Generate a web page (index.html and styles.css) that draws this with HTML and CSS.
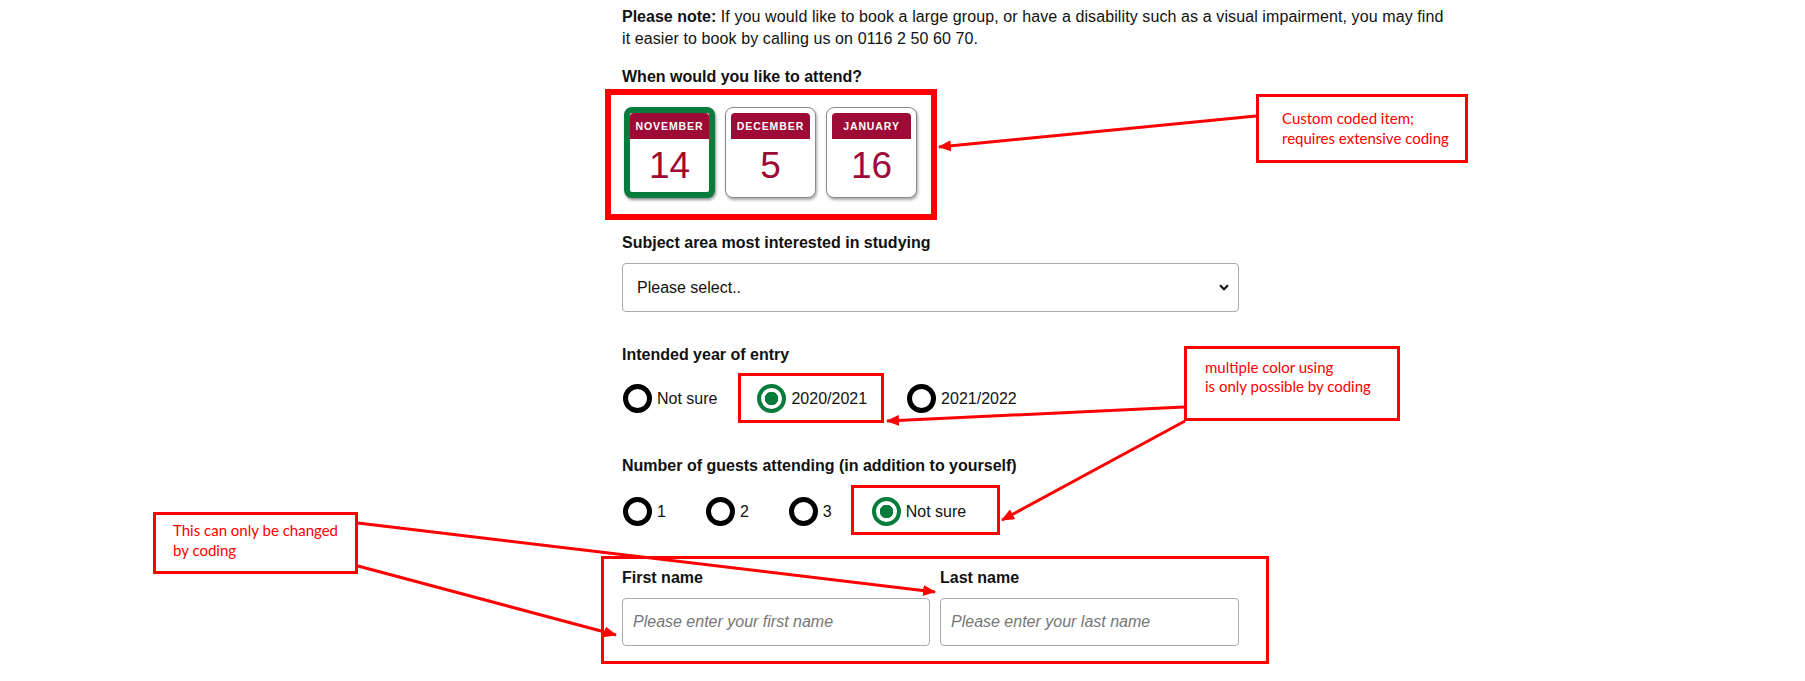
FILE: index.html
```html
<!DOCTYPE html>
<html lang="en">
<head>
<meta charset="utf-8">
<title>Open day booking</title>
<link rel="stylesheet" href="styles.css">
</head>
<body>
<main class="form">
  <p class="note"><strong>Please note:</strong> If you would like to book a large group, or have a disability such as a visual impairment, you may find it easier to book by calling us on 0116 2 50 60 70.</p>

  <section class="field field-attend">
    <div class="label">When would you like to attend?</div>
    <div class="dates">
      <div class="date is-selected">
        <div class="month">November</div>
        <div class="day">14</div>
      </div>
      <div class="date">
        <div class="month">December</div>
        <div class="day">5</div>
      </div>
      <div class="date">
        <div class="month">January</div>
        <div class="day">16</div>
      </div>
    </div>
  </section>

  <section class="field field-subject">
    <label class="label" for="subject">Subject area most interested in studying</label>
    <div class="select-wrap">
      <select id="subject" class="select">
        <option>Please select..</option>
      </select>
      <svg class="chevron" width="10" height="7" viewBox="0 0 10 7"><path d="M1 1.2 L5 5.2 L9 1.2" fill="none" stroke="#111" stroke-width="2.2"/></svg>
    </div>
  </section>

  <section class="field field-year">
    <div class="label">Intended year of entry</div>
    <div class="radios">
      <div class="radio"><span class="dot"></span><span>Not sure</span></div>
      <div class="radio is-checked"><span class="dot"></span><span>2020/2021</span></div>
      <div class="radio"><span class="dot"></span><span>2021/2022</span></div>
    </div>
  </section>

  <section class="field field-guests">
    <div class="label">Number of guests attending (in addition to yourself)</div>
    <div class="radios">
      <div class="radio"><span class="dot"></span><span>1</span></div>
      <div class="radio"><span class="dot"></span><span>2</span></div>
      <div class="radio"><span class="dot"></span><span>3</span></div>
      <div class="radio is-checked"><span class="dot"></span><span>Not sure</span></div>
    </div>
  </section>

  <section class="field field-names">
    <div class="name-col">
      <label class="label" for="first">First name</label>
      <input id="first" class="input" type="text" placeholder="Please enter your first name">
    </div>
    <div class="name-col">
      <label class="label" for="last">Last name</label>
      <input id="last" class="input" type="text" placeholder="Please enter your last name">
    </div>
  </section>
</main>

<div class="annotations">
  <div class="hl hl-dates"></div>
  <div class="hl hl-year"></div>
  <div class="hl hl-guests"></div>
  <div class="hl hl-names"></div>

  <div class="callout callout-1">Custom coded item;<br>requires extensive coding</div>
  <div class="callout callout-2">multiple color using<br>is only possible by coding</div>
  <div class="callout callout-3">This can only be changed<br>by coding</div>

  <svg class="arrows" width="1805" height="681" viewBox="0 0 1805 681">
    <defs>
      <marker id="head" markerUnits="userSpaceOnUse" markerWidth="13" markerHeight="11" refX="12" refY="5.5" orient="auto">
        <path d="M0 0 L13 5.5 L0 11 Z" fill="#ff0000"/>
      </marker>
    </defs>
    <g stroke="#ff0000" stroke-width="3" fill="none" marker-end="url(#head)">
      <line x1="1256" y1="116" x2="939" y2="147"/>
      <line x1="1184" y1="407" x2="887" y2="421"/>
      <line x1="1185" y1="421" x2="1002" y2="520"/>
      <line x1="358" y1="523" x2="935" y2="592"/>
      <line x1="358" y1="566" x2="616" y2="635"/>
    </g>
  </svg>
</div>
</body>
</html>
```

FILE: styles.css
```css
* {
  box-sizing: border-box;
}

html, body {
  margin: 0;
  padding: 0;
  background: #ffffff;
}

body {
  width: 1805px;
  height: 681px;
  overflow: hidden;
  position: relative;
  font-family: "Liberation Sans", Arial, sans-serif;
  font-size: 16px;
  line-height: 22px;
  color: #111111;
}

.form {
  padding: 6px 0 0 622px;
}

.note {
  margin: 0;
  width: 828px;
  letter-spacing: 0.1px;
}

.note strong {
  font-weight: bold;
  letter-spacing: 0;
}

.label {
  display: block;
  font-weight: bold;
  color: #111;
}

.field-attend {
  margin-top: 16px;
}

.dates {
  display: flex;
  gap: 10px;
  margin-top: 19px;
  padding-left: 2px;
}

.date {
  width: 91px;
  height: 91px;
  border: 1px solid #8a8a8a;
  border-radius: 8px;
  padding: 5px;
  background: #fff;
  box-shadow: 1px 2px 3px rgba(0, 0, 0, 0.35);
  display: flex;
  flex-direction: column;
}

.date.is-selected {
  border: 6px solid #067c3c;
  padding: 0;
  box-shadow: 1px 2px 3px rgba(0, 0, 0, 0.45);
}

.month {
  height: 26px;
  line-height: 26px;
  background: #9d0a36;
  color: #ffffff;
  text-transform: uppercase;
  text-align: center;
  font-weight: bold;
  font-size: 10.5px;
  letter-spacing: 0.9px;
  border-radius: 4px 4px 0 0;
}

.day {
  flex: 1;
  text-align: center;
  font-size: 37px;
  line-height: 53px;
  color: #9d0a36;
}

.field-subject {
  margin-top: 34px;
}

.select-wrap {
  position: relative;
  width: 617px;
  margin-top: 9px;
}

.select {
  display: block;
  width: 617px;
  height: 49px;
  margin: 0;
  padding: 0 0 0 14px;
  border: 1px solid #a9a9a9;
  border-radius: 4px;
  background: #fff;
  font-family: "Liberation Sans", Arial, sans-serif;
  font-size: 16px;
  color: #111;
  appearance: none;
  -webkit-appearance: none;
}

.chevron {
  position: absolute;
  right: 10px;
  top: 21px;
  pointer-events: none;
}

.field-year {
  margin-top: 32px;
}

.field-guests {
  margin-top: 42px;
}

.radios {
  display: flex;
  gap: 40px;
  margin-top: 18px;
  padding-left: 1px;
}

.field-guests .radios {
  margin-top: 20px;
}

.radio {
  display: flex;
  align-items: center;
  gap: 5px;
  color: #111;
}

.dot {
  width: 29px;
  height: 29px;
  border: 5px solid #000;
  border-radius: 50%;
  background: #fff;
  flex: none;
}

.radio.is-checked .dot {
  border: 4px solid #067c3c;
  background: radial-gradient(circle, #067c3c 0 6.5px, #fff 7px);
}

.field-names {
  margin-top: 41px;
  display: grid;
  grid-template-columns: 308px 299px;
  column-gap: 10px;
}

.input {
  display: block;
  width: 100%;
  height: 48px;
  margin-top: 9px;
  padding: 0 0 0 10px;
  border: 1px solid #a9a9a9;
  border-radius: 4px;
  font-family: "Liberation Sans", Arial, sans-serif;
  font-size: 16px;
  color: #111;
  background: #fff;
}

.input::placeholder {
  color: #767676;
  font-style: italic;
}

/* ---------- annotation overlay ---------- */

.annotations {
  position: absolute;
  left: 0;
  top: 0;
  width: 1805px;
  height: 681px;
  pointer-events: none;
}

.hl {
  position: absolute;
  border: 3px solid #ff0000;
}

.hl-dates {
  left: 605px;
  top: 89px;
  width: 332px;
  height: 131px;
  border-width: 6px;
}

.hl-year {
  left: 738px;
  top: 373px;
  width: 146px;
  height: 50px;
}

.hl-guests {
  left: 851px;
  top: 485px;
  width: 149px;
  height: 50px;
}

.hl-names {
  left: 601px;
  top: 556px;
  width: 668px;
  height: 108px;
}

.callout {
  position: absolute;
  border: 3px solid #ff0000;
  background: #fff;
  color: #ff0000;
  font-family: Lato, "Noto Sans", sans-serif;
  font-size: 15px;
  line-height: 20px;
}

.callout-1 {
  left: 1256px;
  top: 94px;
  width: 212px;
  height: 69px;
  padding: 11px 0 0 23px;
}

.callout-2 {
  left: 1184px;
  top: 346px;
  width: 216px;
  height: 75px;
  padding: 9px 0 0 18px;
  line-height: 19px;
}

.callout-3 {
  left: 153px;
  top: 512px;
  width: 205px;
  height: 62px;
  padding: 5px 0 0 17px;
}

.arrows {
  position: absolute;
  left: 0;
  top: 0;
}
```
